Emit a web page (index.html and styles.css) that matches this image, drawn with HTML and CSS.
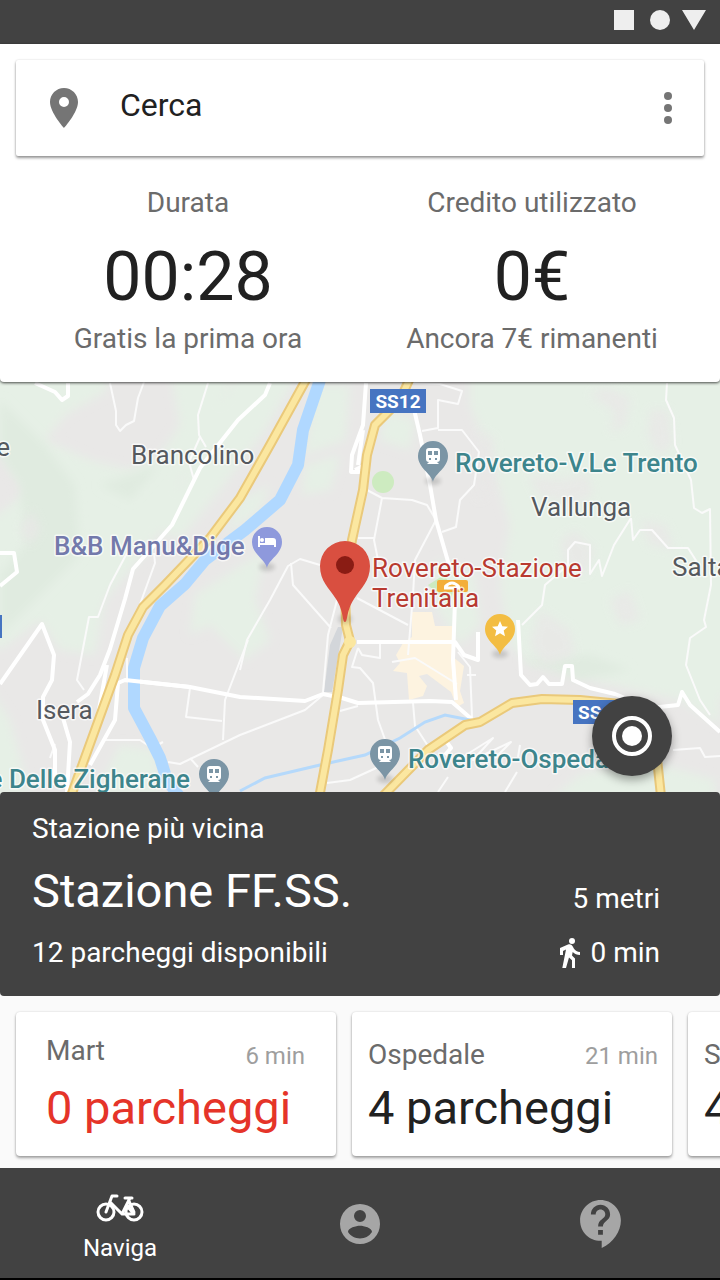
FILE: index.html
```html
<!DOCTYPE html>
<html lang="it">
<head>
<meta charset="utf-8">
<meta name="viewport" content="width=device-width, initial-scale=1">
<title>Naviga</title>
<link rel="stylesheet" href="styles.css">
</head>
<body>
<div class="app">
  <div class="status-bar">
    <svg class="status-icons" viewBox="0 0 92 20" aria-hidden="true"><path d="M0 0h20v20H0zM68 0h24L80 20z"/><circle cx="46" cy="10" r="10"/></svg>
  </div>

  <header class="top-panel">
    <form class="search" role="search">
      <label class="search-label" for="search-input" aria-label="Cerca">
        <svg class="icon" viewBox="0 0 24 24" aria-hidden="true"><path d="M12 2C8.13 2 5 5.13 5 9c0 5.25 7 13 7 13s7-7.750 7-13c0-3.870-3.130-7-7-7zm0 9.500a2.500 2.500 0 1 1 0-5 2.500 2.500 0 0 1 0 5z"/></svg>
      </label>
      <input class="search-input" id="search-input" type="text" placeholder="Cerca">
      <button class="icon-button" type="button" aria-label="Menu">
        <svg class="icon" viewBox="0 0 24 24" aria-hidden="true"><circle cx="12" cy="6" r="2"/><circle cx="12" cy="12" r="2"/><circle cx="12" cy="18" r="2"/></svg>
      </button>
    </form>
    <div class="stats">
      <section class="stat">
        <h2 class="stat-label">Durata</h2>
        <p class="stat-value">00:28</p>
        <p class="stat-note">Gratis la prima ora</p>
      </section>
      <section class="stat">
        <h2 class="stat-label">Credito utilizzato</h2>
        <p class="stat-value">0€</p>
        <p class="stat-note">Ancora 7€ rimanenti</p>
      </section>
    </div>
  </header>

  <main class="content">
    <section class="map" aria-label="Mappa">
      <svg class="map-canvas" viewBox="0 378 720 418" preserveAspectRatio="xMidYMid slice">
        <defs>
          <filter id="soft" x="-10%" y="-10%" width="120%" height="120%"><feGaussianBlur stdDeviation="5"/></filter>
          <filter id="shade" x="-50%" y="-50%" width="200%" height="200%"><feGaussianBlur stdDeviation="2"/></filter>
          <path id="drop" d="M0 26C-2 17-15 12-15 0a15 15 0 0 1 30 0C15 12 2 17 0 26z"/>
          <g id="train-pin">
            <ellipse class="pin-shade" cx="0" cy="25" rx="8" ry="4"/>
            <use href="#drop" class="pin-train"/>
            <path class="pin-glyph" fill-rule="evenodd" d="M-4-8h8q3 0 3 3v8q0 3-3 3l2 2h-12l2-2q-3 0-3-3v-8q0-3 3-3zM-5-5v4h4v-4zM1-5v4h4v-4zM-4 2v2h2v-2zM2 2v2h2v-2z"/>
          </g>
        </defs>

        <rect class="ground" x="0" y="378" width="720" height="418"/>
        <g class="woods" filter="url(#soft)">
          <path d="M-10 370H110L105 392 65 415 45 440 90 460 130 470 160 455 180 425 170 370H235L205 440 180 480 170 520 130 570 105 600 95 655 60 650 40 620 0 650-10 640V520L30 490 12 470-10 430z"/>
          <path d="M240 370h60l-35 60-45 60-40 50-20-10 40-90z"/>
          <path d="M315 385h35l-5 55-40 15zM305 465l35-10-10 35-28 5zM240 500l30-15-10 25-35 25zM195 595l70-45-10 50 15 40-25 20-35-35-20 10z"/>
          <path d="M470 370h260v330l-70-35-60-5-70 5-20-20-10-60 10-60-20-70-20-50z"/>
          <path d="M435 560l40 15 5 50-20 20-25-40zM640 650l80 20v55l-40-25-80-18-50-20zM645 760l70 20v20H550l30-25z"/>
          <path d="M-10 690l20 30 20 75H-10zM120 745l35 5 5 45H95zM385 410l30 10-5 30-30-10z"/>
        </g>
        <g class="woods-deep" filter="url(#soft)">
          <path d="M0 400l45 45 30 40 5 70-60 60-20 20v-60l25-30-5-60-20-30zM100 485l60-20-30 35z"/>
          <path d="M520 660l70-5 40 15-50 10z"/>
        </g>
        <g class="clearings" filter="url(#soft)">
          <path d="M590 395l15-8 25 10-5 30-15 5 5-20zM650 410l18 0 5 35-15 10-10-20zM528 475l30 5 30-5 5 20-20 10-35-10zM480 430l15 10-5 50-12 10zM560 540l15-10 20 20-10 25-20-10zM610 600l20-10 10 30-20 5zM540 610l30 20 5 25-30 10-15-20zM640 520l25 5 10 25-25-5zM20 530l12-20 8 20-10 15z"/>
        </g>
        <circle class="park" cx="383" cy="482" r="11"/>
        <path class="park" d="M428 585l16-10 10 15-5 15z"/>
        <path class="town" d="M412 612h20l3 14h18l2 20-3 10 12 10-4 25 4 12-7 4-6-15-24-18-8 2 8 10-4 10-14 4-2-27-14-2 7-8-4-8 7-12 9-6z"/>
        <path class="yard" d="M330 645l8-18h5l-11 65h-8z"/>

        <g class="streets">
          <path d="M110 383l6 28v14l4 6 6-6 8-4 4-23 6-16M208 383l-10 32 1 20 7 12M200 437l-11 25 5 18M110 585l17-32M147 585l8-22-1-10M110 585l-12 32h-9l-12 63 7 10M147 585l-8 22M105 740h35l12 8 11-6M168 762l12 2 60-29 65-25 18-15M248 640l-23 60-2 40M190 688l-4 29 36 4M190 758l8 9M127 658v24M50 758l5-14"/>
          <path d="M367 490l15 8 30 2 15 5 9 15M382 498l-8 42 4 20M358 538h17M436 520l-21 40-2 35-5 60M413 383l27 1 22 7-4 13-20-4v28l-16 3M438 430h24l17 22-5 33-14 15-4 27-14 5M320 565l-20-6-12 7-18 34-23 40-7 30M291 563l2 22 38 43M337 600l-9 35-5 57M357 598l51 27M392 662l23-4 42 26M458 652l12 15 2 50M467 675h9M358 648l-6 19 8 1 13 15 5 37 9 25M358 648l4 7 18 3v-14M413 703l2 23 13 20M340 711l18-5M327 783l23-3 35-16M438 792l10-15"/>
          <path d="M667 383l-1 17 8 18 1 27 16 35 3 28 8 5 8-4 1 76-7 35 2 7-16 11-4 27 14 35 10 15M631 518l-17 27-12 31-3-16-9 14v-29l-15-3-7 8v15l-23 20-3 20-20 20M631 518l2 22 7-10h12l16 18h20l9 14M673 750l27-2 5 9 15-1M458 760l35-22-20 22 38-18-16 16M505 792l12-20M520 745l-2 12"/>
        </g>
        <g class="avenues">
          <path d="M35 383l20 9 7 8 6-4V383M270 383l-5 12-27 25-38 48-28 57-22 25-17 19-8 30-15 50-10 26-12 19-11 8M0 553h14l3 19-17 14M0 684l42-60 12 31-2 25-9 17v23l12 30v35M63 718l7 24-3 50M107 665l-9 50M90 765l25-45 3-37 7-3 65 7 50 10 65 4 18-7 19 4 16 5 72-2 22 1 23 20"/>
          <path d="M366 383l-3 42-11 30-1 17h18M363 430l-5 35M413 405l7 30 10 50 6 35 13 45M455 600l-2 60 3 40M357 642h98l9 13 14 5v-28M355 470l14-7M445 755l6-7-5-7"/>
          <path d="M518 620l3 55 9 10 7-1 6-7 6 7h13l3-18h7l1 14 17 8 25 6 35 14 28-3 4-13 8 13 30 27"/>
        </g>

        <path class="river" d="M320 380l-17 50-5 35-18 35-35 30-40 30-20 24-25 22-17 32-9 30v40l16 30 10 20 7 22 12 16"/>
        <path class="brook" d="M240 791l25-13 55-13 45-10 35-17 25-16 20-7 30 6"/>
        <path class="avenues" d="M125 680l65 7"/>

        <g class="highway-edge">
          <path id="highway" d="M307 378l-37 67-30 53-30 40-45 47-22 22-15 28-13 40-20 55-24 66"/>
          <path id="main-road" d="M410 378l-10 22-25 25-8 30-4 35-11 50-7 45 1 40 4 16-7 14-5 35-10 60-9 48"/>
          <path id="ring-road" d="M383 796l45-46 37-25 15-3 32-19 30-4 38 1 50 5 25 35 6 56"/>
        </g>
        <g class="highway">
          <use href="#highway"/><use href="#main-road"/><use href="#ring-road"/>
        </g>
        <circle class="junction" cx="350" cy="642" r="6"/>

        <g class="road-sign"><rect x="370" y="389" width="56" height="24"/><text x="398" y="408" text-anchor="middle">SS12</text></g>
        <g class="road-sign"><rect x="573" y="700" width="56" height="24"/><text x="578" y="719">SS</text></g>
        <path class="sign-edge" d="M0 615h2v23H0z"/>

        <g class="place">
          <text x="10" y="456" text-anchor="end">e</text>
          <text x="131" y="464">Brancolino</text>
          <text x="531" y="516">Vallunga</text>
          <text x="672" y="576">Salta</text>
          <text x="36" y="719">Isera</text>
        </g>
        <g class="place station">
          <text x="455" y="472">Rovereto-V.Le Trento</text>
          <text x="190" y="788" text-anchor="end">e Delle Zigherane</text>
          <text x="408" y="768">Rovereto-Ospeda</text>
        </g>
        <text class="place hotel" x="54" y="555">B&amp;B Manu&amp;Dige</text>
        <rect class="stop-chip" x="437" y="580" width="31" height="12" rx="2"/>
        <path class="stop-glyph" d="M445 587q7-8 14 0M444 588h16"/>
        <g class="place target"><text x="372" y="577">Rovereto-Stazione</text><text x="372" y="607">Trenitalia</text></g>

        <use href="#train-pin" x="433" y="456"/>
        <use href="#train-pin" x="385" y="754"/>
        <use href="#train-pin" x="214" y="774"/>
        <g transform="translate(267 542)">
          <ellipse class="pin-shade" cx="0" cy="25" rx="8" ry="4"/>
          <use href="#drop" class="pin-hotel"/>
          <path class="pin-glyph" d="M-9-6h2v7h5v-5h8q3 0 3 3v6h-2v-2H-7v2h-2z"/><circle class="pin-glyph" cx="-5" cy="-2" r="2"/>
        </g>
        <g transform="translate(500 629)">
          <ellipse class="pin-shade" cx="0" cy="25" rx="8" ry="4"/>
          <use href="#drop" class="pin-star"/>
          <path class="pin-glyph" d="M0-8l2.300 5.300 5.700.5-4.300 3.700 1.300 5.700L0 4.200-5 7.200l1.300-5.700L-8-2.200l5.700-.5z"/>
        </g>
        <ellipse class="pin-shade" cx="345" cy="619" rx="7" ry="5"/>
        <path class="pin-target" d="M345 622c-3 0-1-11-9-23-7-11-16-18-16-33a25 25 0 0 1 50 0c0 15-9 22-16 33-8 12-6 23-9 23z"/>
        <circle class="pin-target-dot" cx="345" cy="565" r="9"/>
      </svg>
      <button class="fab" type="button" aria-label="La mia posizione">
        <svg class="fab-icon" viewBox="0 0 40 40" aria-hidden="true"><circle class="fab-ring" cx="20" cy="20" r="18"/><circle class="fab-dot" cx="20" cy="20" r="10"/></svg>
      </button>
    </section>

    <section class="nearest">
      <p class="nearest-text">Stazione più vicina</p>
      <div class="nearest-row">
        <h1 class="nearest-name">Stazione FF.SS.</h1>
        <p class="nearest-text nearest-distance">5 metri</p>
      </div>
      <div class="nearest-row">
        <p class="nearest-text">12 parcheggi disponibili</p>
        <p class="nearest-text walk">
          <svg class="walk-icon" viewBox="0 0 20 30" aria-hidden="true"><circle cx="12" cy="3" r="3"/><path d="M0 17V10L8 6.500c2-.7 3.700 0 4.600 1.700l1.400 2.500c1.300 2 3.300 3 6 3.300v3c-3 0-5.400-1-7.300-2.900L12 17.500l3 3V30h-3v-7.700l-3-2.800L6 30H2.300L6 11.500 3 13v4z"/></svg>
          0 min
        </p>
      </div>
    </section>

    <section class="cards" aria-label="Altre stazioni">
      <article class="card card-full">
        <div class="card-head"><h2 class="card-name">Mart</h2><p class="card-time">6 min</p></div>
        <p class="card-value">0 parcheggi</p>
      </article>
      <article class="card">
        <div class="card-head"><h2 class="card-name">Ospedale</h2><p class="card-time">21 min</p></div>
        <p class="card-value">4 parcheggi</p>
      </article>
      <article class="card">
        <div class="card-head"><h2 class="card-name">S</h2></div>
        <p class="card-value">4</p>
      </article>
    </section>
  </main>

  <nav class="bottom-nav">
    <a class="nav-item nav-active" href="#naviga" aria-current="page">
      <svg class="bike-icon" viewBox="0 0 48 28" aria-hidden="true">
        <circle cx="10" cy="18" r="8"/><circle cx="38" cy="18" r="8"/>
        <path d="M10 18L16 2h5M14 8l12 12L34 4M29 4h7M33 7l5 11M29 14L26 20h12l-7-8"/>
      </svg>
      <span class="nav-label">Naviga</span>
    </a>
    <a class="nav-item" href="#profilo" aria-label="Profilo">
      <svg class="icon" viewBox="0 0 24 24" aria-hidden="true"><path d="M12 2a10 10 0 1 0 0 20 10 10 0 0 0 0-20zm0 3a3 3 0 1 1 0 6 3 3 0 0 1 0-6zm0 14.200c-2.500 0-4.710-1.280-6-3.220.03-1.990 4-3.080 6-3.080s5.970 1.090 6 3.080a7.200 7.200 0 0 1-6 3.220z"/></svg>
    </a>
    <a class="nav-item" href="#aiuto" aria-label="Aiuto">
      <svg class="help-icon" viewBox="3 2 17 20" aria-hidden="true"><path d="M11.500 2C6.810 2 3 5.810 3 10.500S6.810 19 11.500 19h.5v3c4.860-2.340 8-7 8-11.500C20 5.810 16.190 2 11.500 2zm1 14.500h-2v-2h2v2zm0-3.500h-2c0-3.250 3-3 3-5 0-1.100-.9-2-2-2s-2 .9-2 2h-2c0-2.210 1.790-4 4-4s4 1.790 4 4c0 2.500-3 2.750-3 5z"/></svg>
    </a>
  </nav>
</div>
</body>
</html>
```
FILE: styles.css
```css
* { box-sizing: border-box; }

body, h1, h2, p { margin: 0; font-weight: 400; }

body {
  font-family: Roboto, "Liberation Sans", sans-serif;
  background: #fafafa;
  color: #212121;
}

button { border: 0; padding: 0; font: inherit; cursor: pointer; }

.app { display: flex; flex-direction: column; min-height: 100vh; background: #fafafa; }

.icon { display: block; width: 48px; height: 48px; fill: currentColor; }

/* Status bar */
.status-bar {
  display: flex;
  justify-content: flex-end;
  align-items: flex-start;
  height: 44px;
  padding: 10px 14px;
  background: #424242;
}
.status-icons { width: 92px; height: 20px; fill: #eee; }

/* Search and ride summary */
.top-panel {
  position: relative;
  z-index: 1;
  padding: 16px 16px 27px;
  background: #fff;
  border-radius: 0 0 4px 4px;
  box-shadow: 0 1px 3px rgba(0, 0, 0, .7);
}
.search {
  display: flex;
  align-items: center;
  height: 96px;
  padding: 0 12px 0 24px;
  background: #fff;
  border-radius: 2px;
  box-shadow: 0 2px 3px rgba(0, 0, 0, .4), 0 0 2px rgba(0, 0, 0, .15);
}
.search-label { color: #757575; }
.search-input {
  flex: 1;
  min-width: 0;
  height: 96px;
  padding: 0 16px 6px 32px;
  border: 0;
  outline: 0;
  background: transparent;
  color: #212121;
  font: 32px/40px Roboto, "Liberation Sans", sans-serif;
}
.search-input::placeholder { color: #212121; opacity: 1; }
.icon-button { background: none; color: #757575; }

.stats { display: grid; grid-template-columns: 1fr 1fr; padding-top: 31px; text-align: center; }
.stat-label, .stat-note { font-size: 28px; line-height: 32px; color: #6b6b6b; }
.stat-value { margin: 22px 0 10px; font-size: 68px; line-height: 72px; }

/* Map */
.content { display: flex; flex: 1; flex-direction: column; }
.map { position: relative; flex: 1; min-height: 240px; margin: -4px 0; overflow: hidden; }
.map-canvas { position: absolute; inset: 0; width: 100%; height: 100%; }

.ground, .clearings { fill: #e9e8e7; }
.clearings { opacity: .8; }
.woods { fill: #e6f0e6; }
.woods-deep { fill: #e0ebe0; }
.park { fill: #cdebc0; }
.town { fill: #fdf3e0; }
.yard { fill: #d3d6da; }
.streets { fill: none; stroke: #fafafa; stroke-width: 2; stroke-linejoin: round; }
.avenues { fill: none; stroke: #fff; stroke-width: 4; stroke-linejoin: round; }
.river { fill: none; stroke: #b0d8ff; stroke-width: 12; stroke-linejoin: round; }
.brook { fill: none; stroke: #b5d9fb; stroke-width: 3; }
.highway-edge { fill: none; stroke: #eac97a; stroke-width: 10; stroke-linejoin: round; }
.highway { fill: none; stroke: #fbe7a0; stroke-width: 6; stroke-linejoin: round; }
.junction { fill: #fbe7a0; }
.road-sign rect, .sign-edge { fill: #4674c1; }
.road-sign text { fill: #fff; font-size: 19px; font-weight: 700; }

.place {
  fill: #55595e;
  stroke: #fff;
  stroke-width: 3px;
  stroke-linejoin: round;
  stroke-opacity: .7;
  paint-order: stroke;
  font-size: 26px;
}
.station { fill: #3d858c; font-weight: 500; }
.hotel { fill: #7379ab; font-weight: 500; }
.target { fill: #b83a30; }
.pin-train { fill: #7b95a5; }
.pin-hotel { fill: #8e99dc; }
.pin-star { fill: #f3bd42; }
.pin-glyph { fill: #fff; }
.pin-shade { fill: #000; opacity: .15; filter: url(#shade); }
.pin-target { fill: #d94f40; }
.pin-target-dot { fill: #8a1c14; }
.stop-chip { fill: #f3ae3a; }
.stop-glyph { fill: none; stroke: #fff; stroke-width: 3; }

.fab {
  position: absolute;
  right: 48px;
  bottom: 20px;
  display: grid;
  place-items: center;
  width: 80px;
  height: 80px;
  border-radius: 50%;
  background: #424242;
  box-shadow: 0 4px 10px rgba(0, 0, 0, .35);
}
.fab-icon { width: 40px; height: 40px; }
.fab-ring { fill: none; stroke: #fff; stroke-width: 4; }
.fab-dot { fill: #fff; }

/* Nearest station */
.nearest {
  position: relative;
  display: flex;
  flex-direction: column;
  gap: 18px;
  padding: 21px 60px 27px 32px;
  border-radius: 4px;
  background: #424242;
  color: #fff;
}
.nearest-row { display: flex; justify-content: space-between; align-items: flex-end; }
.nearest-text { font-size: 28px; line-height: 32px; }
.nearest-name { font-size: 47px; line-height: 56px; }
.nearest-distance { padding-bottom: 4px; }
.walk { display: flex; align-items: center; gap: 10px; }
.walk-icon { width: 20px; height: 30px; fill: #fff; }

/* Other stations */
.cards {
  display: flex;
  gap: 16px;
  padding: 16px 16px 12px;
  overflow-x: auto;
  scrollbar-width: none;
}
.card {
  flex: 0 0 320px;
  padding: 27px 14px 20px 16px;
  border-radius: 4px;
  background: #fff;
  box-shadow: 0 2px 3px rgba(0, 0, 0, .35), 0 0 2px rgba(0, 0, 0, .15);
}
.card-head { display: flex; justify-content: space-between; align-items: flex-end; margin-bottom: 9px; }
.card-name { font-size: 28px; line-height: 32px; color: #6b6b6b; }
.card-time { font-size: 24px; line-height: 30px; color: #9e9e9e; }
.card-value { font-size: 47px; line-height: 56px; }
.card-full { padding: 23px 31px 20px 30px; }
.card-full .card-name { padding-bottom: 4px; }
.card-full .card-value { color: #e53429; }

/* Bottom navigation */
.bottom-nav {
  display: grid;
  grid-template-columns: repeat(3, 1fr);
  height: 112px;
  border-bottom: 2px solid #000;
  background: #424242;
}
.nav-item {
  display: flex;
  flex-direction: column;
  align-items: center;
  justify-content: center;
  gap: 12px;
  padding-top: 2px;
  color: #a6a6a6;
  text-decoration: none;
}
.nav-active { padding-top: 10px; color: #fff; }
.nav-label { font-size: 24px; line-height: 28px; }
.bike-icon {
  width: 48px;
  height: 28px;
  fill: none;
  stroke: currentColor;
  stroke-width: 3;
  stroke-linecap: round;
  stroke-linejoin: round;
}
.help-icon { width: 41px; height: 48px; fill: currentColor; }
```
